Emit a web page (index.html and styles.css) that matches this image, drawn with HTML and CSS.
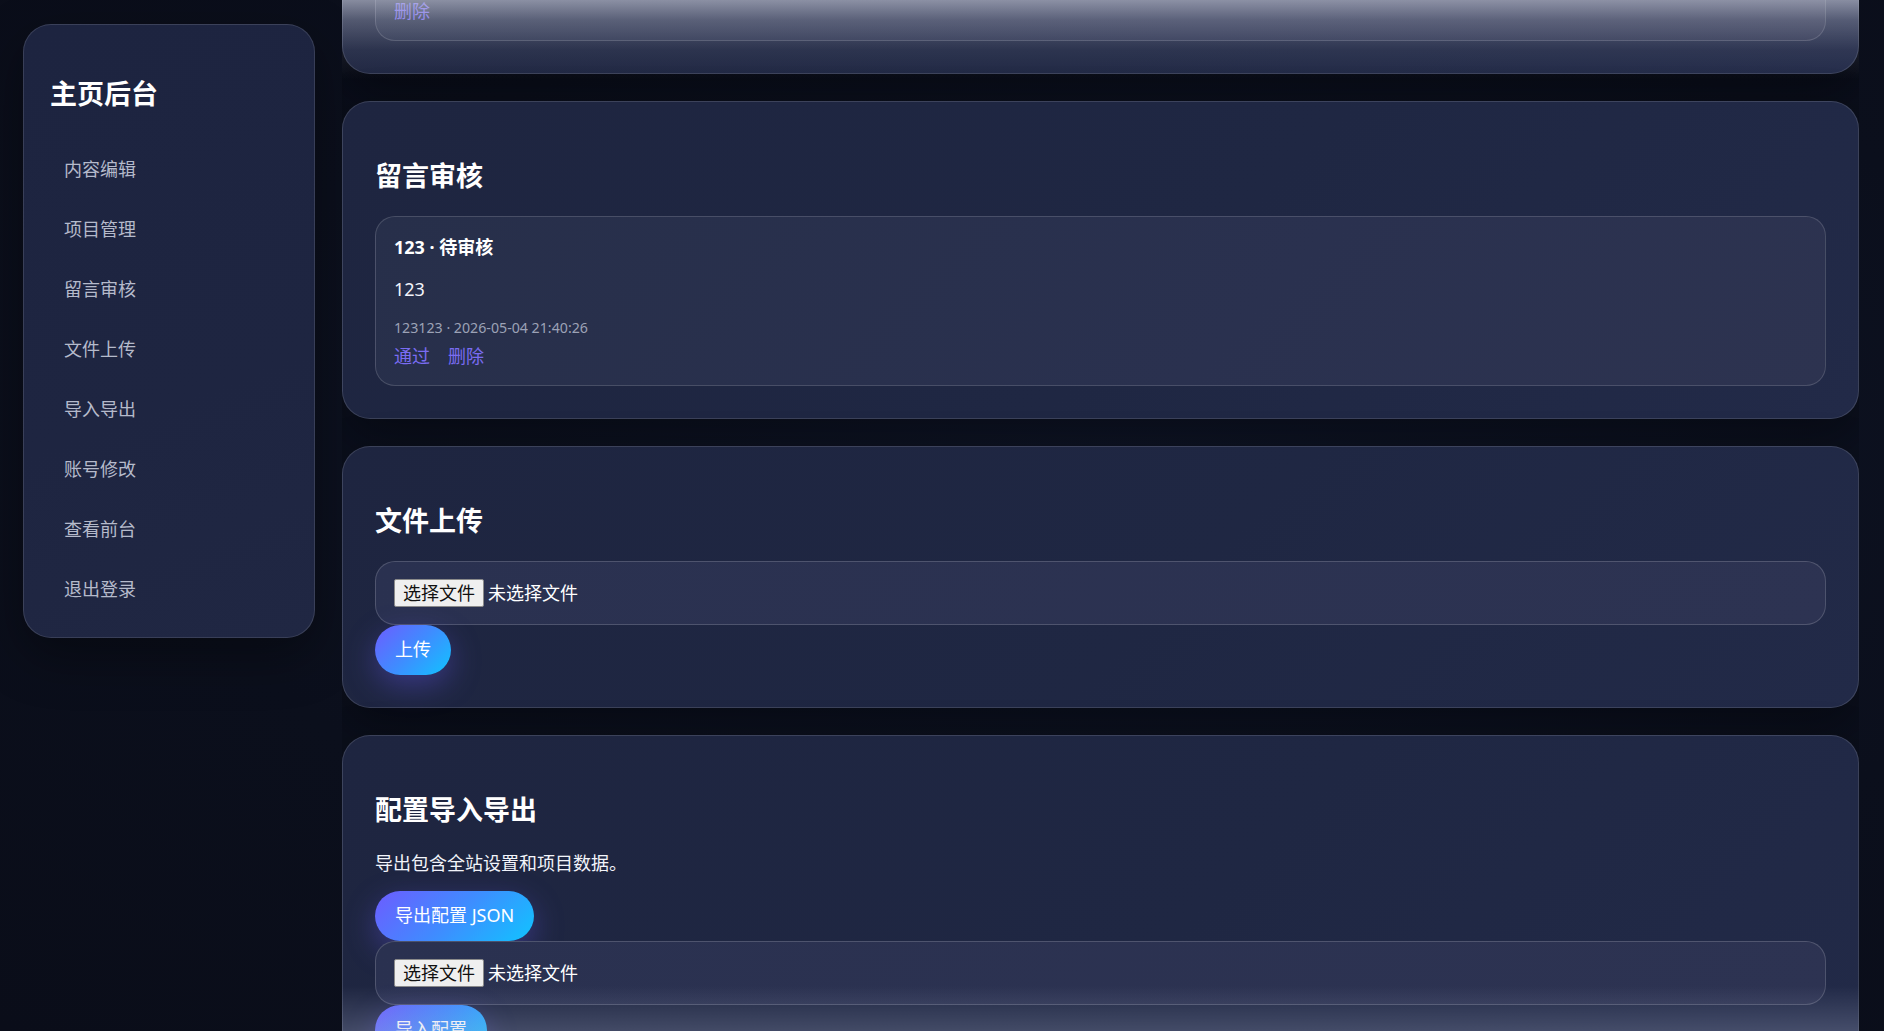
FILE: index.html
```html
<!DOCTYPE html>
<html lang="zh-CN">
<head>
<meta charset="utf-8">
<title>主页后台</title>
<link rel="stylesheet" href="styles.css">
</head>
<body>
<div class="layout">
  <aside class="sidebar">
    <h1 class="brand">主页后台</h1>
    <nav class="nav">
      <a href="#">内容编辑</a>
      <a href="#">项目管理</a>
      <a href="#">留言审核</a>
      <a href="#">文件上传</a>
      <a href="#">导入导出</a>
      <a href="#">账号修改</a>
      <a href="#">查看前台</a>
      <a href="#">退出登录</a>
    </nav>
  </aside>
  <main class="main">
    <div class="scroller" id="scroller">
      <section class="card" id="first-card">
        <h2 class="card-title">项目管理</h2>
        <div class="stack">
          <div class="item">
            <div class="item-title">示例项目</div>
            <p class="item-text">项目简介</p>
            <div class="item-actions"><a href="#">删除</a></div>
          </div>
        </div>
      </section>

      <section class="card">
        <h2 class="card-title">留言审核</h2>
        <div class="item">
          <div class="item-title">123 · 待审核</div>
          <p class="item-text">123</p>
          <div class="item-meta">123123 · 2026-05-04 21:40:26</div>
          <div class="item-actions"><a href="#">通过</a><a href="#">删除</a></div>
        </div>
      </section>

      <section class="card">
        <h2 class="card-title">文件上传</h2>
        <div class="stack">
          <label class="file">
            <input type="file" class="file-input">
            <span class="file-btn">选择文件</span>
            <span class="file-name">未选择文件</span>
          </label>
          <button class="btn" type="button">上传</button>
        </div>
      </section>

      <section class="card">
        <h2 class="card-title">配置导入导出</h2>
        <p class="desc">导出包含全站设置和项目数据。</p>
        <div class="stack">
          <button class="btn" type="button">导出配置 JSON</button>
          <label class="file">
            <input type="file" class="file-input">
            <span class="file-btn">选择文件</span>
            <span class="file-name">未选择文件</span>
          </label>
          <button class="btn" type="button">导入配置</button>
        </div>
      </section>
    </div>
    <div class="fade fade-top"></div>
    <div class="fade fade-bottom"></div>
  </main>
</div>
<script src="app.js"></script>
</body>
</html>
```

FILE: styles.css
```css
html, body {
  margin: 0;
  height: 100%;
}

body {
  background: radial-gradient(ellipse at 60% 45%, #0f1527 0%, #0b0f1c 60%, #0a0d19 100%);
  color: #eef0f8;
  font-family: "Noto Sans", "Noto Sans CJK SC", sans-serif;
  overflow: hidden;
}

.layout {
  display: grid;
  grid-template-columns: 292px 1fr;
  gap: 27px;
  padding: 0 25px 0 23px;
  height: 100vh;
  box-sizing: border-box;
}

/* Sidebar */
.sidebar {
  align-self: start;
  margin-top: 24px;
  padding: 26px 26px 18px;
  border: 1px solid rgba(255, 255, 255, 0.12);
  border-radius: 28px;
  background: linear-gradient(160deg, #1d2440 0%, #1e2541 60%, #202743 100%);
  box-shadow: 0 18px 50px rgba(0, 0, 0, 0.35);
}

.brand {
  margin: 25px 0 28px;
  font-size: 27px;
  line-height: 35px;
  font-weight: 700;
  color: #ffffff;
}

.nav a {
  display: block;
  padding: 16px 14px;
  font-size: 18px;
  line-height: 28px;
  color: #b5bacb;
  text-decoration: none;
  border-radius: 12px;
}

/* Main column */
.main {
  position: relative;
  height: 100vh;
  overflow: hidden;
}

.scroller {
  height: 100%;
  box-sizing: border-box;
  overflow-y: auto;
  scrollbar-width: none;
  padding: 24px 0;
  display: flex;
  flex-direction: column;
  gap: 27px;
}

.scroller::-webkit-scrollbar {
  display: none;
}

.card {
  flex-shrink: 0;
  padding: 32px;
  border: 1px solid rgba(255, 255, 255, 0.13);
  border-radius: 28px;
  background: linear-gradient(135deg, #1e2540 0%, #1f2743 55%, #222a48 100%);
  box-shadow: 0 20px 50px rgba(0, 0, 0, 0.35);
}

.card-title {
  margin: 24px 0 23px;
  font-size: 27px;
  line-height: 35px;
  font-weight: 700;
  color: #ffffff;
}

.stack {
  display: flex;
  flex-direction: column;
  align-items: flex-start;
}

.stack > .file,
.stack > .item {
  align-self: stretch;
}

/* Message item */
.item {
  padding: 17px 18px 15px;
  border: 1px solid rgba(255, 255, 255, 0.15);
  border-radius: 20px;
  background: linear-gradient(135deg, #272f4a 0%, #2a314f 60%, #2d3350 100%);
}

.item-title {
  font-size: 18px;
  line-height: 27px;
  font-weight: 700;
  color: #ffffff;
}

.item-text {
  margin: 15px 0 14px;
  font-size: 18px;
  line-height: 27px;
  color: #f2f4fa;
}

.item-meta {
  margin-bottom: 4px;
  font-size: 14.2px;
  line-height: 22px;
  color: #9ca2b6;
}

.item-actions {
  display: flex;
  gap: 18px;
  font-size: 18px;
  line-height: 27px;
}

.item-actions a {
  color: #7a6cf2;
  text-decoration: none;
}

/* File picker */
.file {
  display: flex;
  align-items: center;
  gap: 4px;
  padding: 17px 18px;
  border: 1px solid rgba(255, 255, 255, 0.17);
  border-radius: 20px;
  background: linear-gradient(135deg, #2a3150 0%, #2d3352 100%);
  font-size: 18px;
  line-height: 28px;
}

.file-input {
  position: absolute;
  width: 1px;
  height: 1px;
  opacity: 0;
  pointer-events: none;
}

.file-btn {
  box-sizing: border-box;
  height: 28px;
  padding: 0 8px;
  border: 1px solid #8a8a8a;
  border-radius: 2px;
  background: #efefef;
  color: #111111;
  line-height: 26px;
}

.file-name {
  color: #ffffff;
}

/* Buttons */
.btn {
  padding: 11px 20px 12px;
  border: none;
  border-radius: 999px;
  background: linear-gradient(135deg, #6d5cff 0%, #3f8cff 50%, #10c4ff 100%);
  box-shadow: 0 10px 30px rgba(108, 92, 255, 0.35);
  color: #ffffff;
  font-family: inherit;
  font-size: 18px;
  line-height: 27px;
}

.desc {
  margin: 0 0 14px;
  font-size: 18px;
  line-height: 27px;
  color: #f2f4fa;
}

/* Edge fades over the scrolling column */
.fade {
  position: absolute;
  left: 0;
  right: 0;
  pointer-events: none;
}

.fade-top {
  top: 0;
  height: 80px;
  background: linear-gradient(to bottom,
    rgba(205, 208, 222, 0.6) 0px,
    rgba(205, 208, 222, 0.3) 20px,
    rgba(205, 208, 222, 0.08) 50px,
    rgba(205, 208, 222, 0) 80px);
}

.fade-bottom {
  bottom: 0;
  height: 45px;
  background: linear-gradient(to top,
    rgba(170, 178, 205, 0.26) 0px,
    rgba(170, 178, 205, 0) 45px);
}
```

FILE: app.js
```js
(function () {
  var scroller = document.getElementById('scroller');
  var first = document.getElementById('first-card');
  if (scroller && first) {
    scroller.scrollTop += first.getBoundingClientRect().bottom - 74;
  }
})();
```
